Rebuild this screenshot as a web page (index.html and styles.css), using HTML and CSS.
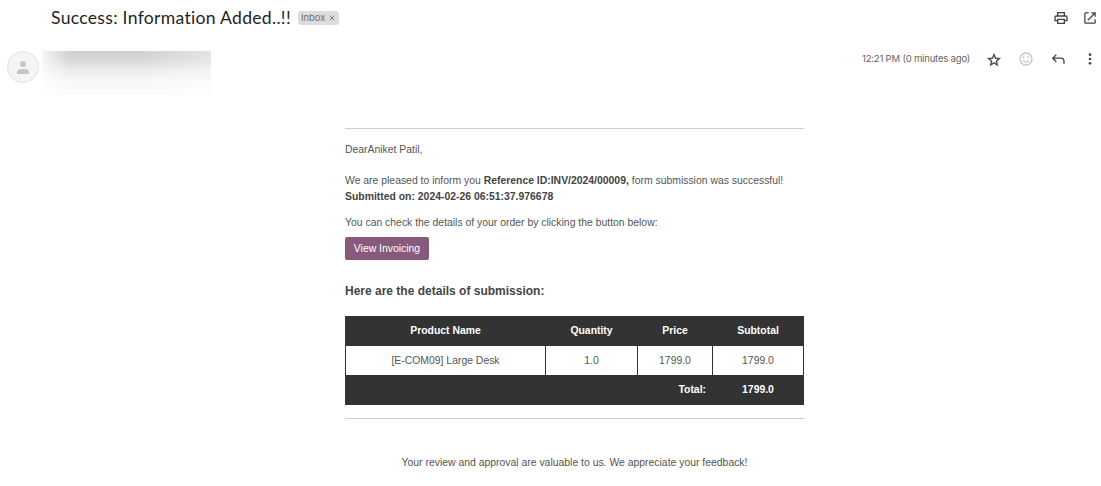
FILE: index.html
```
<!DOCTYPE html>
<html lang="en">
<head>
<meta charset="utf-8">
<title>Success: Information Added..!!</title>
<link rel="stylesheet" href="styles.css">
</head>
<body>
<header class="subject-bar">
  <h1 class="subject">Success: Information Added..!!</h1>
  <span class="label">Inbox <svg class="label-close" viewBox="0 0 6 6"><path d="M.7.7l4.6 4.6M5.3.7L.7 5.3" stroke="#777" stroke-width="1"/></svg></span>
  <div class="subject-actions">
    <svg class="icon" viewBox="0 0 24 24"><path d="M19 8h-1V3H6v5H5c-1.66 0-3 1.34-3 3v6h4v4h12v-4h4v-6c0-1.66-1.34-3-3-3zM8 5h8v3H8V5zm8 14H8v-4h8v4zm2-4v-2H6v2H4v-4c0-.55.45-1 1-1h14c.55 0 1 .45 1 1v4h-2z"/></svg>
    <svg class="icon" viewBox="-.5 -.5 25 25"><path d="M19 19H5V5h5V3H5c-1.110 0-2 .9-2 2v14c0 1.100.89 2 2 2h14c1.100 0 2-.9 2-2v-5h-2v5zM14 3v2h3.590l-9.830 9.830 1.410 1.410L19 6.410V10h2V3h-7z"/></svg>
  </div>
</header>
<section class="sender-bar">
  <div class="avatar"><svg viewBox="0 0 12 13"><circle cx="6" cy="3" r="3"/><path d="M0 13v-2.200C0 8.700 3.400 8 6 8s6 .7 6 2.800V13z"/></svg></div>
  <div class="redacted"></div>
  <div class="meta">
    <span class="time">12:21 PM (0 minutes ago)</span>
    <svg class="icon star" viewBox="0 0 24 24"><path d="M22 9.240l-7.190-.62L12 2 9.190 8.630 2 9.240l5.460 4.730L5.820 21 12 17.270 18.180 21l-1.630-7.030L22 9.240zM12 15.400l-3.760 2.270 1-4.280-3.320-2.880 4.380-.38L12 6.100l1.710 4.040 4.380.38-3.320 2.880 1 4.280L12 15.400z" stroke="#444" stroke-width=".5"/></svg>
    <svg class="icon faded" viewBox="0 0 24 24"><path d="M12 2a10 10 0 1 0 0 20 10 10 0 0 0 0-20zm0 18a8 8 0 1 1 0-16 8 8 0 0 1 0 16z"/><circle cx="8.500" cy="9.500" r="1.500"/><circle cx="15.500" cy="9.500" r="1.500"/><path d="M12 17.500c2.280 0 4.220-1.300 5-3.500h-1.800c-.6 1.200-1.800 1.900-3.200 1.900s-2.600-.7-3.200-1.900H7c.78 2.200 2.720 3.500 5 3.500z"/></svg>
    <svg class="icon" viewBox="0 0 24 24"><path d="M8.700 4.800L2.700 10.800l6 6 1.400-1.400-3.600-3.600H16a4 4 0 0 1 4 4V19h2v-3.200a6 6 0 0 0-6-6H6.500l3.600-3.600z"/></svg>
    <svg class="icon" viewBox="0 0 24 24"><circle cx="12" cy="5.500" r="2"/><circle cx="12" cy="12" r="2"/><circle cx="12" cy="18.500" r="2"/></svg>
  </div>
</section>
<main class="message">
  <p class="greeting">DearAniket Patil,</p>
  <p class="intro">We are pleased to inform you <b>Reference ID:INV/2024/00009,</b> form submission was successful!<br><b>Submitted on: 2024-02-26 06:51:37.976678</b></p>
  <p class="check">You can check the details of your order by clicking the button below:</p>
  <a class="button">View Invoicing</a>
  <h2 class="details-title">Here are the details of submission:</h2>
  <table class="details">
    <colgroup><col class="c-product"><col class="c-qty"><col class="c-price"><col class="c-subtotal"></colgroup>
    <thead><tr><th>Product Name</th><th>Quantity</th><th>Price</th><th>Subtotal</th></tr></thead>
    <tbody><tr><td>[E-COM09] Large Desk</td><td>1.0</td><td>1799.0</td><td>1799.0</td></tr></tbody>
    <tfoot><tr><th class="total" colspan="3">Total:</th><th>1799.0</th></tr></tfoot>
  </table>
</main>
<footer class="closing">Your review and approval are valuable to us. We appreciate your feedback!</footer>
</body>
</html>
```
FILE: styles.css
```
* { box-sizing: border-box; }
body {
  margin: 0;
  height: 486px;
  overflow: hidden;
  background: #fff;
  color: #555;
  font: 10.42px/16px "Liberation Sans", Arial, sans-serif;
}
h1, h2, p { margin: 0; }
svg { display: block; flex: none; }
.subject-bar {
  display: flex;
  align-items: center;
  height: 36px;
  padding: 0 3px 0 51px;
}
.subject {
  width: 247px;
  color: #1f1f1f;
  font: 400 17.6px/24px Lato, sans-serif;
  white-space: nowrap;
  letter-spacing: .28px;
}
.label {
  display: flex;
  align-items: center;
  justify-content: space-between;
  width: 41px;
  height: 14px;
  padding: 0 4px 0 3px;
  border-radius: 3px;
  background: #ddd;
  color: #707070;
  font: 9.6px/14px Inter, sans-serif;
  letter-spacing: -.1px;
}
.label-close { width: 6px; height: 6px; }
.subject-actions { display: flex; gap: 13px; margin-left: auto; }
.icon { width: 16px; height: 16px; fill: #444; }
.star { margin-top: 1px; }
.faded { fill: #c4c4c4; }
.sender-bar {
  display: flex;
  align-items: flex-start;
  height: 92px;
  padding: 15px 3px 0 7px;
}
.avatar {
  display: grid;
  place-items: center;
  width: 32px;
  height: 32px;
  border: 1px solid #e2e2e2;
  border-radius: 50%;
  background: #f5f5f5;
}
.avatar svg { width: 12px; height: 13px; fill: #c6c6c6; }
.redacted {
  width: 169px;
  height: 44px;
  margin-left: 3px;
  background:
    linear-gradient(90deg, rgba(255,255,255,.8), rgba(255,255,255,0) 16%, rgba(255,255,255,0) 60%, rgba(255,255,255,.4)),
    linear-gradient(#d0d0d0, #d7d7d7 20%, #ececec 44%, #f8f8f8 68%, #fdfdfd);
}
.meta { display: flex; align-items: center; gap: 16px; height: 16px; margin-left: auto; }
.time {
  width: 108px;
  color: #666;
  font: 9.6px/16px Inter, sans-serif;
  letter-spacing: -.23px;
  white-space: nowrap;
}
.message {
  width: 459px;
  height: 291px;
  margin-left: 345px;
  border-top: 1px solid #ccc;
  border-bottom: 1px solid #ccc;
}
.greeting { padding-top: 13px; }
.intro { padding-top: 15px; }
.intro b { color: #444; }
.check { padding-top: 10px; }
.button {
  display: block;
  width: 84px;
  height: 23px;
  margin-top: 6px;
  border-radius: 2px;
  background: #875a7b;
  color: #fff;
  line-height: 23px;
  text-align: center;
}
.details-title { margin-top: 22px; font-size: 12px; line-height: 18px; color: #454545; }
.details {
  width: 459px;
  margin-top: 16px;
  border-collapse: collapse;
  table-layout: fixed;
  text-align: center;
}
.c-product { width: 200px; }
.c-qty { width: 92px; }
.c-price { width: 75px; }
.c-subtotal { width: 91px; }
.details th, .details td { height: 29px; padding: 0 6px; border: 1px solid #333; }
.details td { height: 30px; }
.details th { background: #333; color: #fff; }
.details .total { text-align: right; }
.closing { width: 459px; margin: 36px 0 0 345px; text-align: center; }
```
